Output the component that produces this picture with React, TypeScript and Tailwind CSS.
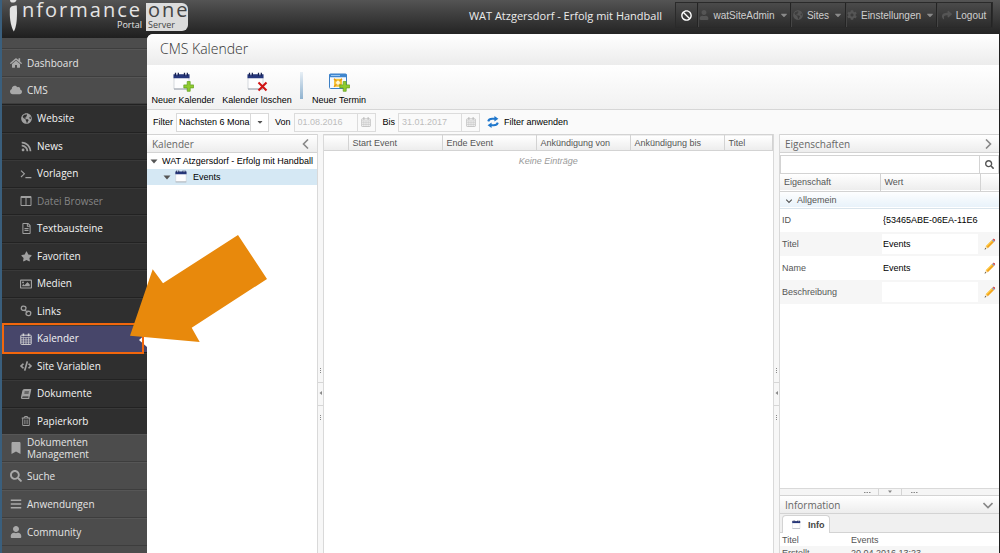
import type { ReactNode } from "react";
import {
  FaBan, FaBars, FaBook, FaBookmark, FaCaretDown, FaCloud, FaCode, FaCog, FaColumns,
  FaGlobeAmericas, FaHome, FaRegFileAlt, FaRegImage, FaRegTrashAlt, FaRss,
  FaSearch, FaShare, FaStar, FaUser,
} from "react-icons/fa";

const UI = "font-['Liberation_Sans',Arial,sans-serif]";
const HEAD = "font-['Open_Sans',sans-serif]";

function Grid({ className = "" }: { className?: string }) {
  return (
    <svg viewBox="0 0 12 12" className={className} fill="none" stroke="currentColor">
      <rect x="0.8" y="2.2" width="10.4" height="9.2" rx="0.6" strokeWidth="1" />
      <path d="M1 4.6h10M1 6.9h10M1 9.1h10M3.4 4.5v6.8M6 4.5v6.8M8.6 4.5v6.8" strokeWidth="0.7" />
      <path d="M3.4 0.4v2.8M8.6 0.4v2.8" strokeWidth="1.6" />
    </svg>
  );
}

function Prompt() {
  return (
    <svg viewBox="0 0 12 12" className="size-3" fill="none" stroke="currentColor" strokeWidth="1.1">
      <path d="M1 2.6l3.4 3.2L1 9M5.4 9.6h6" />
    </svg>
  );
}

function Chain() {
  return (
    <svg viewBox="0 0 12 12" className="size-3" fill="none" stroke="currentColor" strokeWidth="1.3">
      <rect x="1.3" y="1.2" width="4.6" height="4.2" rx="1.8" transform="rotate(12 3.6 3.3)" />
      <rect x="6.1" y="6.3" width="4.6" height="4.2" rx="1.8" transform="rotate(12 8.4 8.4)" />
      <path d="M4.6 4.6l3 2.9" />
    </svg>
  );
}

function Columns() {
  return (
    <svg viewBox="0 0 12 12" className="size-3" fill="none" stroke="currentColor">
      <path d="M1 1.500h10v9H1zM6 1.500v9" />
      <path d="M1 2.200h10" strokeWidth="1.600" />
    </svg>
  );
}

function Sheet({ className = "", badge }: { className?: string; badge?: "add" | "remove" }) {
  return (
    <svg viewBox="0 0 22 20" className={className}>
      <path d="M2 3h15v14H2z" fill="#fdfdfe" stroke="#c3c8d0" strokeWidth="0.7" />
      <path d="M2 17h15" stroke="#9aa0aa" />
      <path d="M1.5 2.2h16v4h-16z" fill="#26377c" />
      <path d="M3.5 0.8v3M6.3 0.8v3M12.5 0.8v3M15.3 0.8v3" stroke="#17214e" strokeWidth="1.3" />
      <path d="M4.9 1.2v2M13.9 1.2v2" stroke="#dfe3f2" strokeWidth="0.8" />
      {badge === "add" && <Plus />}
      {badge === "remove" && (
        <path d="M12.5 10.5l8 8M20.5 10.5l-8 8" stroke="#d01414" strokeWidth="2.1" />
      )}
    </svg>
  );
}

function Plus() {
  return (
    <path
      d="M15.2 9.5h3v3.4h3.4v3h-3.4v3.4h-3v-3.4h-3.4v-3h3.4z"
      fill="#8fcb2f"
      stroke="#5f9d1d"
      strokeWidth="0.7"
    />
  );
}

function EventIcon() {
  return (
    <svg viewBox="0 0 22 20" className="h-5 w-[22px]">
      <rect x="1.5" y="2" width="17" height="14.5" rx="1" fill="#f4f9ff" stroke="#3c7fc4" />
      <path d="M1.5 2h17v3.2h-17z" fill="#3f86cf" />
      <path d="M3 3.5h9" stroke="#9cc8f2" />
      <rect x="6" y="6.8" width="8" height="8" fill="#f7c63c" />
      <path d="M6 6.8l8 8M14 6.8l-8 8" stroke="#e79a17" strokeWidth="1.4" />
      <circle cx="10" cy="10.8" r="2" fill="#fff7d0" />
      <Plus />
    </svg>
  );
}

function Refresh() {
  return (
    <svg viewBox="0 0 12 12" className="size-3" fill="none" stroke="#2077cc" strokeWidth="2">
      <path d="M1.2 5.4c.6-2 2.2-2.6 4-2.6h3" />
      <path d="M10.8 6.6c-.6 2-2.2 2.6-4 2.6h-3" />
      <path d="M7.4 0l4 2.8-4 2.8zM4.6 6.4l-4 2.8 4 2.8z" fill="#2077cc" stroke="none" />
    </svg>
  );
}

function Pencil() {
  return (
    <svg viewBox="0 0 12 12" className="size-3">
      <path d="M1.800 8.200L7.800 2.200l2 2-6 6z" fill="#f3a41c" />
      <path d="M1.800 8.200L7.800 2.200l.7.7-6 6z" fill="#ffd04a" />
      <path d="M7.800 2.200l1-1 2 2-1 1z" fill="#8f95ad" />
      <path d="M8.800 1.200c1-1.200 3.200.800 2 2z" fill="#d5423e" />
      <path d="M1.800 8.200l2 2-3.100 1.100z" fill="#f1d9b0" />
      <path d="M1.200 10l.9.9-1.500.500z" fill="#222" />
    </svg>
  );
}

function Chevron({ d, className = "" }: { d: string; className?: string }) {
  return (
    <svg viewBox="0 0 10 10" className={className} fill="none" stroke="currentColor">
      <path d={d} />
    </svg>
  );
}

function Triangle() {
  return (
    <svg viewBox="0 0 8 5" className="h-[5px] w-2 shrink-0" fill="#555">
      <path d="M0.500 0.500h7L4 4.500z" />
    </svg>
  );
}

function Logo() {
  return (
    <a href="#home" aria-label="Informance One Portal Server" className={`${HEAD} flex pl-[7px] text-xl text-[#e4e4e4]`}>
      <svg viewBox="0 0 9 32" className="h-8 w-[9px]" fill="#e2e2e2">
        <path d="M1 0h6.500C7 2 5.500 2.600 3.800 2.600 2 2.600 1 1.600 1 0z" />
        <path d="M0.800 9C1 6.500 4 5.500 7.800 5.500L8 13c0 8-1 15-3.200 18.500C2.500 28 1 21 0.800 15z" />
      </svg>
      <span className="flex w-32 flex-col items-end pr-[4px]">
        <span className="h-5 leading-5 tracking-widest">nformance</span>
        <span className="text-[9px] leading-[9px]">Portal</span>
      </span>
      <span className="mt-[3px] flex h-7 w-[42px] flex-col rounded-r-md bg-[#dcdcdc] pl-[2px] text-[#444]">
        <span className="h-[17px] leading-[14px] tracking-widest">one</span>
        <span className="text-[9px] leading-[9px]">Server</span>
      </span>
    </a>
  );
}

function TopButton({ icon, label, caret, className = "" }: { icon: ReactNode; label: string; caret?: boolean; className?: string }) {
  return (
    <button className={`flex items-center justify-center gap-1 border-r border-[#242424] shadow-[inset_1px_0_0_#454545] ${className}`}>
      <span className="text-[#555]">{icon}</span>
      {label}
      {caret && <FaCaretDown className="size-[10px] text-[#8a8a8a]" />}
    </button>
  );
}

function Header() {
  return (
    <header className="flex h-[38px] shrink-0 items-start justify-between bg-linear-to-b from-[#545454] to-[#1f1f1f]">
      <Logo />
      <div className="flex items-start">
        <div className={`${HEAD} pr-[13px] text-[11px] leading-8 text-[#ececec]`}>WAT Atzgersdorf - Erfolg mit Handball</div>
        <nav className={`${UI} mt-[2px] mr-[7px] flex h-[26px] border border-[#2a2a2a] bg-linear-to-b from-[#4b4b4b] to-[#2c2c2c] text-[10px] text-[#cfcfcf]`}>
          <button aria-label="Sperren" className="flex w-[22px] items-center justify-center border-r border-[#242424] text-white">
            <FaBan className="size-[11px]" />
          </button>
          <TopButton className="w-[93px]" icon={<FaUser className="size-[10px]" />} label="watSiteAdmin" caret />
          <TopButton className="w-[55px]" icon={<FaGlobeAmericas className="size-[10px]" />} label="Sites" caret />
          <TopButton className="w-[91px]" icon={<FaCog className="size-[10px]" />} label="Einstellungen" caret />
          <TopButton className="w-[55px]" icon={<FaShare className="size-[10px]" />} label="Logout" />
        </nav>
      </div>
    </header>
  );
}

const topItem = "flex shrink-0 items-center gap-[5px] border-b border-[#3d3d3d] pl-2 leading-3 shadow-[inset_0_1px_0_#565656]";
const ic = "size-3 shrink-0 text-[#a9a9a9]";
const si = "size-[11px]";

const subItems: { label: string; icon: ReactNode; muted?: boolean; active?: boolean }[] = [
  { label: "Website", icon: <FaGlobeAmericas className={si} /> },
  { label: "News", icon: <FaRss className={si} /> },
  { label: "Vorlagen", icon: <Prompt /> },
  { label: "Datei Browser", icon: <Columns />, muted: true },
  { label: "Textbausteine", icon: <FaRegFileAlt className={si} /> },
  { label: "Favoriten", icon: <FaStar className={si} /> },
  { label: "Medien", icon: <FaRegImage className="size-3" /> },
  { label: "Links", icon: <Chain /> },
  { label: "Kalender", icon: <Grid className="size-3" />, active: true },
  { label: "Site Variablen", icon: <FaCode className="size-3" /> },
  { label: "Dokumente", icon: <FaBook className="size-[10px] -skew-x-12" /> },
  { label: "Papierkorb", icon: <FaRegTrashAlt className="size-[10px]" /> },
];

function Sidebar() {
  return (
    <aside className={`${HEAD} flex w-[145px] shrink-0 flex-col bg-[#4c4c4c] text-[10px] text-[#e4e4e4]`}>
      <div className="h-[11px] shrink-0 border-b border-[#3d3d3d]" />
      <a href="#dashboard" className={`${topItem} h-7`}><FaHome className={ic} />Dashboard</a>
      <a href="#cms" className={`${topItem} h-[27px]`}><FaCloud className={ic} />CMS</a>
      <div className="grid h-[330px] shrink-0 grid-rows-12 bg-[#2f2f2f] text-[#f4f4f4]">
        {subItems.map((s) => (
          <a
            key={s.label}
            href={`#${s.label}`}
            className={`relative flex items-center gap-[5px] border-t border-[#222] pt-px pl-[18px] shadow-[inset_0_1px_0_#393939] ${s.muted ? "text-[#858585]" : ""} ${s.active ? "z-10 bg-[#47466a]" : ""}`}
          >
            <span className={`flex w-3 shrink-0 justify-center ${s.active ? "text-[#d5d5d5]" : "text-[#a0a0a0]"}`}>{s.icon}</span>
            {s.label}
            {s.active && (
              <>
                <svg viewBox="0 0 8 14" className="absolute top-[8px] right-0 h-[14px] w-2" fill="#fff"><path d="M8 0v14L0 7z" /></svg>
                <span className="absolute -inset-y-[2px] right-[3px] left-0 border-2 border-[#f2660c]" />
              </>
            )}
          </a>
        ))}
      </div>
      <a href="#dokumente" className={`${topItem} h-7`}><FaBookmark className={ic} />Dokumenten<br />Management</a>
      <a href="#suche" className={`${topItem} h-7`}><FaSearch className={ic} />Suche</a>
      <a href="#anwendungen" className={`${topItem} h-7`}><FaBars className={ic} />Anwendungen</a>
      <a href="#community" className={`${topItem} h-7`}><FaUser className={ic} />Community</a>
    </aside>
  );
}

function Tool({ icon, label, className = "" }: { icon: ReactNode; label: string; className?: string }) {
  return (
    <button className={`flex flex-col items-center gap-[2px] whitespace-nowrap ${className}`}>
      {icon}
      {label}
    </button>
  );
}

function DateField({ id, label, value }: { id: string; label: string; value: string }) {
  return (
    <>
      <label htmlFor={id} className="mr-[3px]">{label}</label>
      <span className="mr-[7px] flex h-[19px] w-[82px] border border-[#dcdcdc] bg-[#fafafa] text-[#bdbdbd]">
        <input id={id} type="text" disabled defaultValue={value} className="w-full min-w-0 flex-1 pl-[3px]" />
        <span className="flex w-[18px] items-center justify-center border-l border-[#dcdcdc]"><Grid className="size-[10px]" /></span>
      </span>
    </>
  );
}

const bar = "border-[#d3d3d3] bg-linear-to-b from-white to-[#ededed]";

function PanelHead({ title, d }: { title: string; d: string }) {
  return (
    <h2 className={`${HEAD} ${bar} flex h-[19px] shrink-0 items-center justify-between border-y pr-[6px] pl-[5px] text-[10px] text-[#666]`}>
      {title}
      <button aria-label={`${title} einklappen`} className="text-[#888]">
        <Chevron d={d} className="size-[10px] stroke-[1.600]" />
      </button>
    </h2>
  );
}

function Splitter() {
  return (
    <div className="flex w-[7px] shrink-0 flex-col items-center justify-start border-x border-[#d9d9d9] bg-[#f7f7f7] pt-[224px] text-[#888]">
      <svg viewBox="0 0 5 70" className="h-[70px] w-[5px]" fill="currentColor">
        <path d="M2 10h1v1H2zM2 12h1v1H2zM2 14h1v1H2zM2 57h1v1H2zM2 59h1v1H2zM2 61h1v1H2zM4 33v4L1.500 35z" />
        <path d="M0 24h5v.8H0zM0 47h5v.8H0z" fill="#ccc" />
      </svg>
    </div>
  );
}

function TreePanel() {
  return (
    <section className="flex w-[170px] shrink-0 flex-col bg-white">
      <PanelHead title="Kalender" d="M7 0.500L2.500 5 7 9.500" />
      <ul>
        <li className="flex h-4 items-center gap-1 pl-[3px] whitespace-nowrap"><Triangle />WAT Atzgersdorf - Erfolg mit Handball</li>
        <li className="flex h-4 items-center gap-[3px] bg-[#d5e8f4] pl-4">
          <Triangle />
          <Sheet className="h-[14px] w-4" />
          Events
        </li>
      </ul>
    </section>
  );
}

const th = "border-r border-[#d3d3d3] pl-[4px] text-left font-normal whitespace-nowrap";

function EventTable() {
  return (
    <section className="min-w-0 flex-1 bg-white text-[#555]">
      <table className="w-full table-fixed border-collapse">
        <thead className={`border-y ${bar}`}>
          <tr className="h-4">
            <th className={`${th} w-6`} />
            <th className={`${th} w-[94px]`}>Start Event</th>
            <th className={`${th} w-[94px]`}>Ende Event</th>
            <th className={`${th} w-[94px]`}>Ankündigung von</th>
            <th className={`${th} w-[94px]`}>Ankündigung bis</th>
            <th className={th}>Titel</th>
          </tr>
        </thead>
        <tbody>
          <tr className="h-5"><td colSpan={6} className="text-center text-[9px] text-[#999] italic">Keine Einträge</td></tr>
        </tbody>
      </table>
    </section>
  );
}

const properties = [
  { label: "ID", value: "{53465ABE-06EA-11E6-9", fixed: true },
  { label: "Titel", value: "Events" },
  { label: "Name", value: "Events" },
  { label: "Beschreibung", value: "" },
];

function Properties() {
  return (
    <section className="flex w-[219px] shrink-0 flex-col bg-white text-[#555]">
      <PanelHead title="Eigenschaften" d="M3 0.500L7.500 5 3 9.500" />
      <form className="mt-[2px] flex h-[19px] shrink-0 border border-[#d3d3d3]">
        <input type="search" aria-label="Eigenschaften durchsuchen" className="min-w-0 flex-1" />
        <button type="button" aria-label="Suchen" className="flex w-[19px] items-center justify-center border-l border-[#d3d3d3]">
          <FaSearch className="size-[9px]" />
        </button>
      </form>
      <table className="w-full table-fixed border-collapse">
        <thead className={`border-b ${bar}`}>
          <tr className="h-[17px]">
            <th className={`${th} w-[100px]`}>Eigenschaft</th>
            <th className={`${th} w-[100px]`}>Wert</th>
            <th />
          </tr>
        </thead>
        <tbody>
          <tr className="h-[17px] border-b border-[#d9e4ec] bg-linear-to-b from-white to-[#e8f2fa]">
            <td colSpan={3} className="pl-[5px]">
              <span className="flex items-center gap-1">
                <Chevron d="M1.500 4.500L5 8l3.500-3.500" className="size-2 stroke-[1.400]" />
                Allgemein
              </span>
            </td>
          </tr>
          {properties.map((p) => (
            <tr key={p.label} className="h-6 odd:bg-[#f6f6f6] even:bg-white">
              <td className="pl-[2px]"><label htmlFor={`p-${p.label}`}>{p.label}</label></td>
              <td className="pr-[2px] pl-[2px]">
                <input id={`p-${p.label}`} type="text" defaultValue={p.value} readOnly={p.fixed} className="block h-5 w-full bg-white pl-[1px] text-black" />
              </td>
              <td>
                {!p.fixed && <button aria-label={`${p.label} bearbeiten`} className="flex w-full justify-center"><Pencil /></button>}
              </td>
            </tr>
          ))}
        </tbody>
      </table>
      <div className="mt-auto flex h-[7px] shrink-0 items-center justify-center border-t border-[#d9d9d9] bg-[#f5f5f5]">
        <svg viewBox="0 0 60 6" className="h-[6px] w-[60px]" fill="#888">
          <path d="M4 3h1.500v1H4zM6.500 3H8v1H6.500zM9 3h1.500v1H9zM51 3h1.500v1H51zM53.500 3H55v1h-1.500zM56 3h1.500v1H56zM28 1.500h4L30 4z" />
          <path d="M18 0h.8v6H18zM41 0h.8v6H41z" fill="#ccc" />
        </svg>
      </div>
      <PanelHead title="Information" d="M0.500 3L5 7.500 9.500 3" />
      <div role="tablist" className="flex h-[19px] shrink-0 items-end border-b border-[#d3d3d3] bg-[#f0f0f0] pl-[2px]">
        <button role="tab" aria-selected="true" className="-mb-px flex h-[18px] w-12 items-center gap-[5px] rounded-t-sm border border-b-0 border-[#d3d3d3] bg-white pl-2 font-bold text-[#444]">
          <Sheet className="h-[10px] w-3" />
          Info
        </button>
      </div>
      <div className="h-5 shrink-0 overflow-hidden">
        <table className="w-full table-fixed">
          <tbody>
            <tr className="h-[13px]"><td className="w-[71px] pl-[2px]">Titel</td><td>Events</td></tr>
            <tr className="h-[13px] bg-[#f6f6f6]"><td className="pl-[2px]">Erstellt</td><td>20.04.2016 13:23</td></tr>
          </tbody>
        </table>
      </div>
    </section>
  );
}

export default function App() {
  return (
    <div className="relative flex h-screen flex-col overflow-hidden border-l-2 border-[#3a5f7d] bg-[#1f1f1f]">
      <Header />
      <div className="flex min-h-0 flex-1">
        <Sidebar />
        <main className={`${UI} relative -mt-1 mr-px flex min-w-0 flex-1 flex-col overflow-hidden rounded-tl-md bg-[#f7f7f7] text-[9px] leading-[12px] text-black`}>
          <h1 className={`${HEAD} h-[31px] shrink-0 bg-linear-to-b from-white to-[#ececec] pl-[13px] text-sm leading-[30px] font-light text-[#333]`}>CMS Kalender</h1>
          <div className="flex h-[45px] shrink-0 items-start border-b border-[#d6d6d6] bg-linear-to-b from-white to-[#f1f1f1] pt-[7px] pl-[5px]">
            <Tool className="w-[62px]" icon={<Sheet badge="add" className="h-5 w-[22px]" />} label="Neuer Kalender" />
            <Tool className="ml-[9px] w-[68px]" icon={<Sheet badge="remove" className="h-5 w-[22px]" />} label="Kalender löschen" />
            <div className="mx-[9px] h-[27px] w-[3px] bg-linear-to-b from-[#e8eff5] to-[#8fb2cf]" />
            <Tool className="w-[54px]" icon={<EventIcon />} label="Neuer Termin" />
          </div>
          <div className="flex h-6 shrink-0 items-center bg-[#fafafa] pl-[6px]">
            <label htmlFor="filter" className="mr-[3px]">Filter</label>
            <span className="relative mr-[6px] flex h-[19px] w-[93px] border border-[#d9d9d9] bg-white">
              <select id="filter" className="w-full appearance-none pl-[2px]"><option>Nächsten 6 Mona</option></select>
              <span className="pointer-events-none absolute inset-y-0 right-0 flex w-[18px] items-center justify-center border-l border-[#d9d9d9] bg-white">
                <FaCaretDown className="size-2 text-[#555]" />
              </span>
            </span>
            <DateField id="von" label="Von" value="01.08.2016" />
            <DateField id="bis" label="Bis" value="31.01.2017" />
            <button className="flex items-center gap-[5px]"><Refresh />Filter anwenden</button>
          </div>
          <div className="flex min-h-0 flex-1">
            <TreePanel />
            <Splitter />
            <EventTable />
            <Splitter />
            <Properties />
          </div>
        </main>
      </div>
      <svg viewBox="0 0 138 108" className="pointer-events-none absolute top-[235px] left-32 z-20 h-[108px] w-[138px]" fill="#e8890c">
        <path d="M108 0l29 44-75.300 48.700 8 14.300L0 100.700 22.700 34.300 33 48.300z" />
      </svg>
    </div>
  );
}
